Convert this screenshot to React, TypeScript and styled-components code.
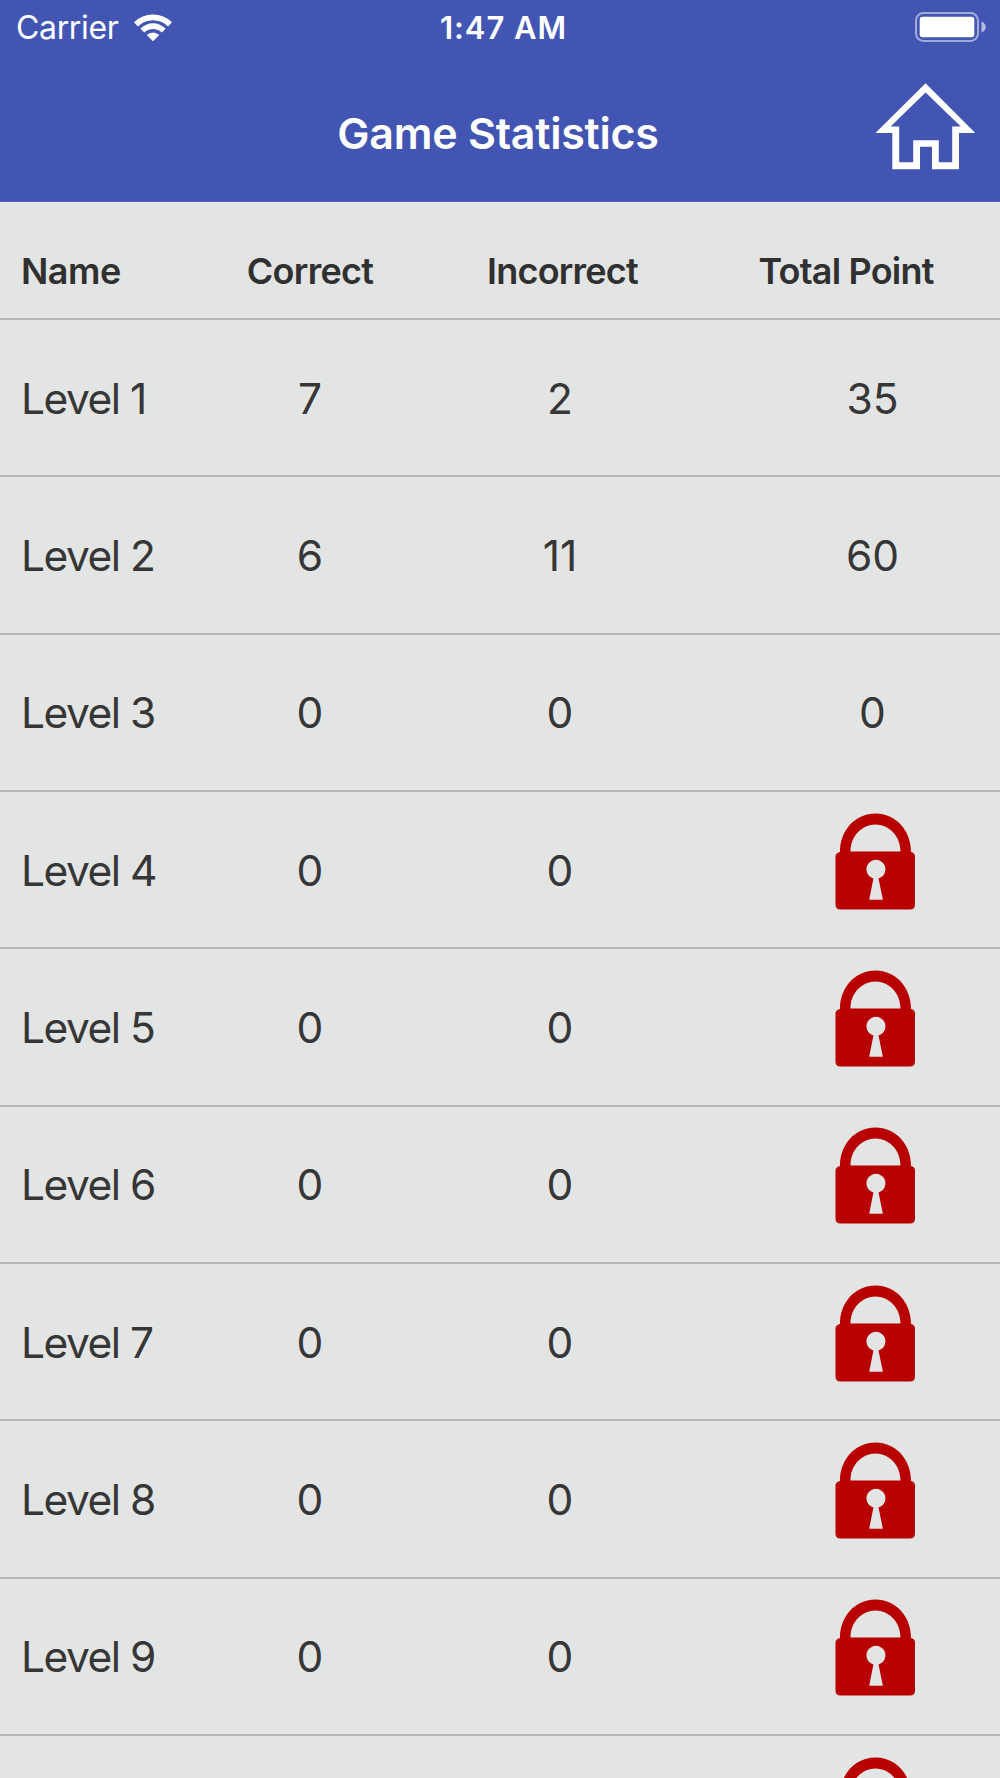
import React from "react";
import styled, { createGlobalStyle } from "styled-components";

const GlobalStyle = createGlobalStyle`
  html, body { margin: 0; padding: 0; }
  body { background: #e3e5e4; }
`;

const Screen = styled.div`
  width: 1000px;
  height: 1778px;
  overflow: hidden;
  display: flex;
  flex-direction: column;
  background: #e3e5e4;
  color: #363636;
  font-family: Inter, "Liberation Sans", sans-serif;
`;

const Header = styled.header`
  flex: none;
  height: 202px;
  background: #4255b2;
  border-bottom: 1px solid #f0f1f3;
  color: #ffffff;
`;

const StatusBar = styled.div`
  display: grid;
  grid-template-columns: 1fr auto 1fr;
  align-items: center;
  height: 54px;
  padding: 0 14px 0 16px;
`;

const Carrier = styled.div`
  display: flex;
  align-items: center;
  gap: 16px;
  padding-top: 1px;
  font-size: 32px;
  line-height: 40px;
  letter-spacing: -0.35px;
`;

const Clock = styled.div`
  font-size: 31px;
  font-weight: 600;
  line-height: 40px;
  letter-spacing: 0.95px;
  padding: 1px 0 0 5px;
`;

const Battery = styled.svg`
  justify-self: end;
  display: block;
`;

const TitleBar = styled.div`
  display: grid;
  grid-template-columns: 125px 1fr 125px;
  align-items: center;
  height: 148px;
`;

const Title = styled.h1`
  grid-column: 2;
  margin: 0;
  padding: 10px 4px 0 0;
  text-align: center;
  font-size: 43px;
  font-weight: 600;
  line-height: 52px;
  letter-spacing: -0.25px;
`;

const HomeButton = styled.button`
  align-self: start;
  margin: 29px 0 0;
  padding: 0;
  border: 0;
  background: none;
  color: inherit;
  display: flex;
`;

const Row = styled.div<{ $head?: boolean }>`
  flex: none;
  display: grid;
  grid-template-columns: 185px 250px 250px 315px;
  align-items: center;
  box-sizing: border-box;
  height: ${(p) => (p.$head ? "117px" : "157.33px")};
  border-bottom: 2px solid #b4b6b5;
  font-size: ${(p) => (p.$head ? "36px" : "42.5px")};
  font-weight: ${(p) => (p.$head ? 600 : 400)};
  color: ${(p) => (p.$head ? "#303030" : "inherit")};
  padding-top: ${(p) => (p.$head ? "21px" : "1px")};
`;

const NameCell = styled.div<{ $head?: boolean }>`
  padding-left: 21px;
  white-space: nowrap;
  letter-spacing: ${(p) => (p.$head ? "-0.5px" : "-1.5px")};
`;

const Cell = styled.div<{ $inset?: number; $tracking?: number }>`
  display: flex;
  justify-content: center;
  white-space: nowrap;
  padding-left: ${(p) => p.$inset ?? 0}px;
  letter-spacing: ${(p) => p.$tracking ?? 0}px;
`;

const LockIcon = styled.svg`
  display: block;
  flex: none;
  margin-bottom: 18px;
`;

const Wifi = () => (
  <svg width="38" height="28" viewBox="0 0 38 28" fill="#fff">
    <path d="M0 8.3A27 27 0 0 1 38 8.3L34 12.4A21.3 21.3 0 0 0 4 12.4Z" />
    <path d="M6.3 14.6A18 18 0 0 1 31.7 14.6L27.8 18.6A12.4 12.4 0 0 0 10.2 18.6Z" />
    <path d="M12.7 21A9 9 0 0 1 25.3 21L19 27.3Z" />
  </svg>
);

const House = () => (
  <svg width="101" height="87" viewBox="0 0 101 87" fill="#fff" fillRule="evenodd">
    <path d="M50.6 0.3L100.3 50H84V86.3H57V63.8H45V86.3H17.3V50H0.4ZM50.6 9.6L15.6 43.500H24.2V79.2H38.2V57.2H63.8V79.2H77.2V43.500H85.8Z" />
  </svg>
);

const Lock = () => (
  <LockIcon width="80" height="97" viewBox="0 0 80 97" fill="#b80000" fillRule="evenodd">
    <path d="M5 39C5 17 20.500 0.500 40.500 0.500S76 17 76 39C78.500 39.500 80 41 80 43.500V91.500Q80 96.500 75 96.500H5.500Q0.500 96.500 0.500 91.500V43.500C0.500 41 2.500 39.500 5 39ZM15.500 38.500H65.500C65.500 23 54 11.500 40.500 11.500S15.500 23 15.500 38.500ZM38.400 65.500L34.200 86.700H47.900L43.500 65.500A9.500 9.500 0 1 0 38.400 65.500Z" />
  </LockIcon>
);

type Level = { name: string; correct: number; incorrect: number; points: number | null };

const levels: Level[] = [
  { name: "Level 1", correct: 7, incorrect: 2, points: 35 },
  { name: "Level 2", correct: 6, incorrect: 11, points: 60 },
  { name: "Level 3", correct: 0, incorrect: 0, points: 0 },
  ...[4, 5, 6, 7, 8, 9].map((n) => ({ name: `Level ${n}`, correct: 0, incorrect: 0, points: null })),
];

export default function App() {
  return (
    <>
      <GlobalStyle />
      <Screen>
        <Header>
          <StatusBar>
            <Carrier>
              Carrier
              <Wifi />
            </Carrier>
            <Clock>1:47 AM</Clock>
            <Battery width="71" height="30" viewBox="0 0 71 30">
              <rect x="1" y="1" width="62" height="28" rx="7.500" fill="none" stroke="#fff" strokeOpacity="0.5" strokeWidth="2" />
              <rect x="4.700" y="4.700" width="54.600" height="20.600" rx="3" fill="#fff" />
              <path d="M66.500 9.500Q70.800 11.500 70.800 15T66.500 20.500Z" fill="#fff" fillOpacity="0.6" />
            </Battery>
          </StatusBar>
          <TitleBar>
            <Title>Game Statistics</Title>
            <HomeButton aria-label="Home">
              <House />
            </HomeButton>
          </TitleBar>
        </Header>
        <Row $head>
          <NameCell $head>Name</NameCell>
          <Cell $tracking={-0.75}>Correct</Cell>
          <Cell $tracking={-0.8} $inset={5}>Incorrect</Cell>
          <Cell $tracking={-0.8} $inset={7}>Total Point</Cell>
        </Row>
        {levels.map((level) => (
          <Row key={level.name}>
            <NameCell>{level.name}</NameCell>
            <Cell>{level.correct}</Cell>
            <Cell>{level.incorrect}</Cell>
            {level.points === null ? (
              <Cell $inset={64}>
                <Lock />
              </Cell>
            ) : (
              <Cell $inset={60}>{level.points}</Cell>
            )}
          </Row>
        ))}
        <Row>
          <NameCell />
          <Cell />
          <Cell />
          <Cell $inset={64}>
            <Lock />
          </Cell>
        </Row>
      </Screen>
    </>
  );
}
